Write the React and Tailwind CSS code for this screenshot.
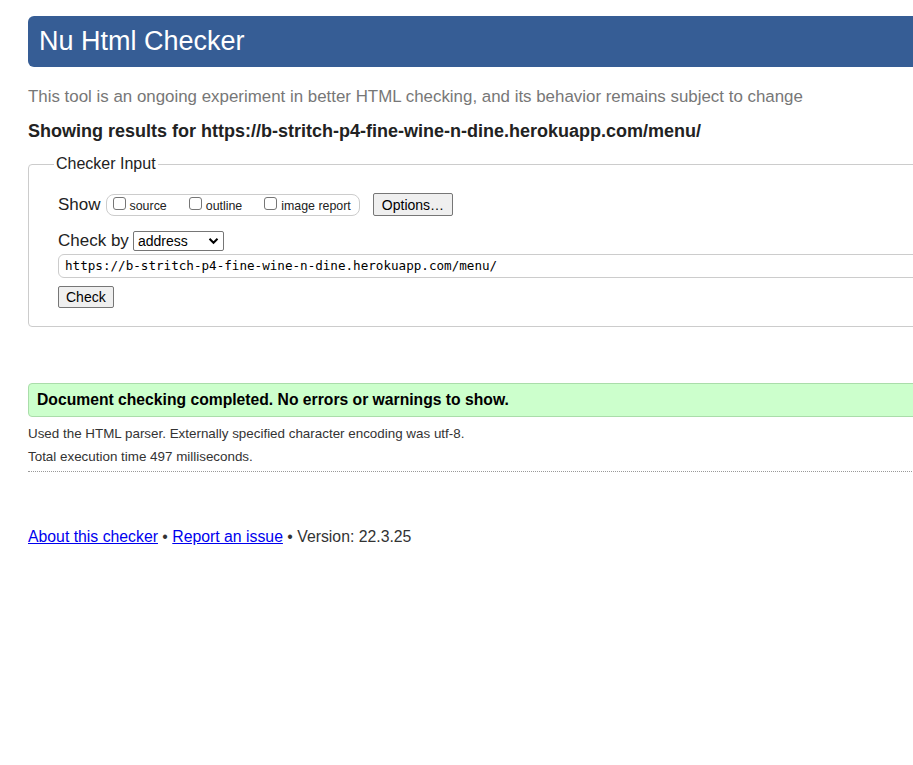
const url = "https://b-stritch-p4-fine-wine-n-dine.herokuapp.com/menu/";

const Checkbox = ({ label }) => (
  <label className="flex items-center mr-[22px] last:mr-0">
    <span className="w-[13px] h-[13px] border border-[#767676] rounded-[3px] bg-white mr-[4px] mt-[-3px]" />
    <span className="text-[12.4px] leading-[14px] mt-[2px]">{label}</span>
  </label>
);

const Button = ({ children, className = "" }) => (
  <button
    className={`h-[22px] px-[7px] text-[14px] leading-[16px] text-black bg-[#efefef] border border-[#767676] rounded-[2px] ${className}`}
  >
    {children}
  </button>
);

export default function App() {
  return (
    <div
      className="w-full min-h-[765px] overflow-hidden bg-white text-[#222]"
      style={{ fontFamily: '"Liberation Sans", Arial, sans-serif' }}
    >
      <div className="w-[1100px] pl-[28px]">
        <h1 className="mt-[16px] h-[51px] flex items-center pl-[11px] bg-[#365d95] rounded-l-[6px] text-white text-[27px] font-normal pb-[1px]">
          Nu Html Checker
        </h1>

        <p className="mt-[20px] text-[16.9px] leading-[19px] text-[#777]">
          This tool is an ongoing experiment in better HTML checking, and its behavior remains subject to change
        </p>

        <p className="mt-[15px] text-[18px] leading-[21px] font-bold">
          Showing results for {url}
        </p>

        <fieldset className="mt-[12px] border border-[#ccc] rounded-[4px] pl-[29px] pb-[17px]">
          <legend className="ml-[-4px] px-[2px] text-[16px] leading-[20px]">Checker Input</legend>

          <div className="mt-[19px] flex items-center h-[23px]">
            <span className="text-[17px] leading-[20px] mr-[5px]">Show</span>
            <div className="flex items-center h-[22px] pl-[6px] pr-[8px] border border-[#ccc] rounded-[8px]">
              <Checkbox label="source" />
              <Checkbox label="outline" />
              <Checkbox label="image report" />
            </div>
            <Button className="ml-[13px] h-[23px] px-[8px]">Options…</Button>
          </div>

          <div className="mt-[15px] flex items-center h-[20px]">
            <span className="text-[17px] leading-[20px] mr-[4px]">Check by</span>
            <div className="w-[91px] h-[20px] flex items-center justify-between pl-[4px] pr-[4px] border border-[#767676] rounded-[2px] text-[14px] leading-[16px] text-black">
              <span>address</span>
              <svg width="11" height="8" viewBox="0 0 11 8">
                <path d="M1.5 1.8 L5.5 5.8 L9.5 1.8" fill="none" stroke="#000" strokeWidth="2" />
              </svg>
            </div>
          </div>

          <div className="mt-[3px] h-[24px] flex items-center pl-[6px] border border-[#ccc] rounded-[6px]">
            <span
              className="text-[12.6px] leading-[16px] text-black"
              style={{ fontFamily: '"DejaVu Sans Mono", "Liberation Mono", monospace' }}
            >
              {url}
            </span>
          </div>

          <Button className="mt-[8px]">Check</Button>
        </fieldset>

        <div className="mt-[56px] h-[34px] flex items-center pl-[8px] bg-[#ccffcc] border border-[#aaddaa] rounded-[4px]">
          <span className="text-[15.7px] leading-[18px] font-bold text-black">
            Document checking completed. No errors or warnings to show.
          </span>
        </div>

        <p className="mt-[9px] text-[13.4px] leading-[16px] text-[#333]">
          Used the HTML parser. Externally specified character encoding was utf-8.
        </p>
        <p className="mt-[7px] text-[13.4px] leading-[16px] text-[#333]">
          Total execution time 497 milliseconds.
        </p>
        <div className="mt-[6px] border-b border-dotted border-[#999]" />

        <p className="mt-[56px] text-[15.8px] leading-[18px] text-[#333]">
          <a href="#" className="text-[#0000ee] underline">About this checker</a>
          {" • "}
          <a href="#" className="text-[#0000ee] underline">Report an issue</a>
          {" • Version: 22.3.25"}
        </p>
      </div>
    </div>
  );
}
